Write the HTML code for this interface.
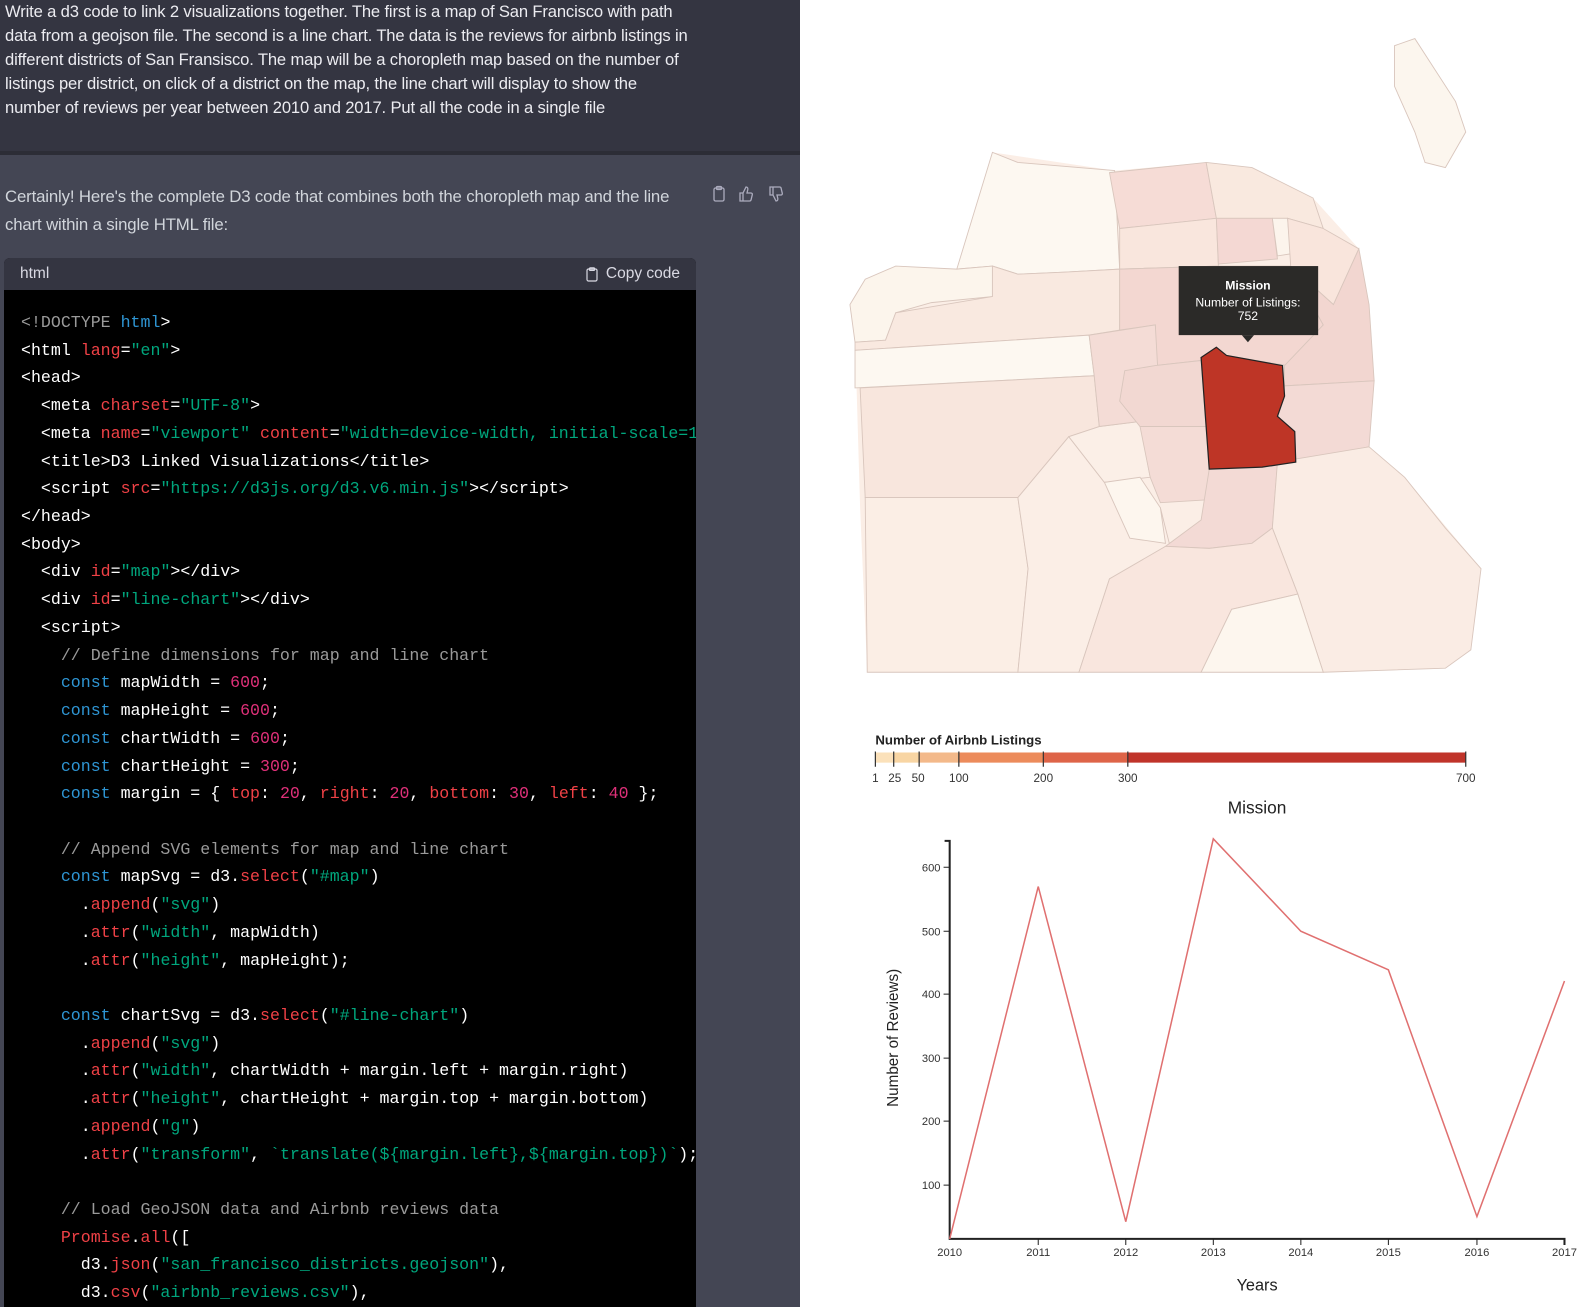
<!DOCTYPE html>
<html><head><meta charset="utf-8">
<style>
*{margin:0;padding:0;box-sizing:border-box}
body{width:1594px;height:1310px;position:relative;overflow:hidden;background:#fff;font-family:"Liberation Sans",sans-serif}
#left{position:absolute;left:0;top:0;width:800px;height:1307px;background:#444654;overflow:hidden}
#prompt{position:absolute;left:0;top:0;width:800px;height:155px;background:#343541;border-bottom:4px solid #2c2d36;color:#ececf1;font-size:16.6px;line-height:24px;padding:0 0 0 5px;white-space:pre;letter-spacing:-0.15px}
#answer{position:absolute;left:5px;top:183px;color:#d1d5db;font-size:16.8px;line-height:28px;white-space:pre;letter-spacing:-0.15px}
#icons{position:absolute;left:712px;top:185px;color:#acacbe}
#cb{position:absolute;left:4px;top:258px;width:692px;height:1060px;background:#000;border-radius:6px 6px 0 0;overflow:hidden}
#cbh{height:32px;background:#343541;color:#d9d9e3;font-size:15.5px;line-height:32px;padding:0 16px 0 16px;position:relative}
#cbh .cp{position:absolute;right:16px;top:0;display:flex;align-items:center;gap:8px}
#code{font-family:"Liberation Mono",monospace;font-size:16.6px;line-height:27.72px;color:#fff;white-space:pre;padding:19px 0 0 17px}
.r{color:#ef4146}.g{color:#00a67d}.b{color:#2e95d3}.c{color:#9a9a9a}.p{color:#df3079}
</style></head><body>
<div id="left">
<div id="prompt">Write a d3 code to link 2 visualizations together. The first is a map of San Francisco with path
data from a geojson file. The second is a line chart. The data is the reviews for airbnb listings in
different districts of San Fransisco. The map will be a choropleth map based on the number of
listings per district, on click of a district on the map, the line chart will display to show the
number of reviews per year between 2010 and 2017. Put all the code in a single file</div>
<div id="answer">Certainly! Here's the complete D3 code that combines both the choropleth map and the line
chart within a single HTML file:</div>
<svg id="icons" width="80" height="18" viewBox="0 0 80 18" fill="none" stroke="#acacbe" stroke-width="1.3">
<rect x="2" y="3" width="10" height="13" rx="1.5"/><rect x="4.5" y="1.5" width="5" height="3" rx="1"/>
<path d="M31 8v8h-3V8zM31 8l3-6c1.5 0 2 1 1.8 2.5L35 8h4c1 0 1.5.8 1.3 1.7l-1.2 5c-.2.8-.8 1.3-1.6 1.3H31"/>
<path d="M61 10V2h-3v8zM61 10l3 6c1.5 0 2-1 1.8-2.5L65 10h4c1 0 1.5-.8 1.3-1.7l-1.2-5C69 2.5 68.4 2 67.6 2H61"/>
</svg>
<div id="cb">
<div id="cbh">html<span class="cp"><svg width="12" height="15" viewBox="0 0 12 15" fill="none" stroke="#d9d9e3" stroke-width="1.2"><rect x="1" y="2" width="10" height="12" rx="1.5"/><rect x="3.5" y="0.8" width="5" height="2.6" rx="0.8"/></svg>Copy code</span></div>
<div id="code"><span class="c">&lt;!DOCTYPE</span> <span class="b">html</span>&gt;
&lt;html <span class="r">lang</span>=<span class="g">"en"</span>&gt;
&lt;head&gt;
  &lt;meta <span class="r">charset</span>=<span class="g">"UTF-8"</span>&gt;
  &lt;meta <span class="r">name</span>=<span class="g">"viewport"</span> <span class="r">content</span>=<span class="g">"width=device-width, initial-scale=1.0"</span>&gt;
  &lt;title&gt;D3 Linked Visualizations&lt;/title&gt;
  &lt;script <span class="r">src</span>=<span class="g">"https://d3js.org/d3.v6.min.js"</span>&gt;&lt;/script&gt;
&lt;/head&gt;
&lt;body&gt;
  &lt;div <span class="r">id</span>=<span class="g">"map"</span>&gt;&lt;/div&gt;
  &lt;div <span class="r">id</span>=<span class="g">"line-chart"</span>&gt;&lt;/div&gt;
  &lt;script&gt;
    <span class="c">// Define dimensions for map and line chart</span>
    <span class="b">const</span> mapWidth = <span class="p">600</span>;
    <span class="b">const</span> mapHeight = <span class="p">600</span>;
    <span class="b">const</span> chartWidth = <span class="p">600</span>;
    <span class="b">const</span> chartHeight = <span class="p">300</span>;
    <span class="b">const</span> margin = { <span class="r">top</span>: <span class="p">20</span>, <span class="r">right</span>: <span class="p">20</span>, <span class="r">bottom</span>: <span class="p">30</span>, <span class="r">left</span>: <span class="p">40</span> };

    <span class="c">// Append SVG elements for map and line chart</span>
    <span class="b">const</span> mapSvg = d3.<span class="r">select</span>(<span class="g">"#map"</span>)
      .<span class="r">append</span>(<span class="g">"svg"</span>)
      .<span class="r">attr</span>(<span class="g">"width"</span>, mapWidth)
      .<span class="r">attr</span>(<span class="g">"height"</span>, mapHeight);

    <span class="b">const</span> chartSvg = d3.<span class="r">select</span>(<span class="g">"#line-chart"</span>)
      .<span class="r">append</span>(<span class="g">"svg"</span>)
      .<span class="r">attr</span>(<span class="g">"width"</span>, chartWidth + margin.left + margin.right)
      .<span class="r">attr</span>(<span class="g">"height"</span>, chartHeight + margin.top + margin.bottom)
      .<span class="r">append</span>(<span class="g">"g"</span>)
      .<span class="r">attr</span>(<span class="g">"transform"</span>, <span class="g">`translate(${margin.left},${margin.top})`</span>);

    <span class="c">// Load GeoJSON data and Airbnb reviews data</span>
    <span class="r">Promise</span>.<span class="r">all</span>([
      d3.<span class="r">json</span>(<span class="g">"san_francisco_districts.geojson"</span>),
      d3.<span class="r">csv</span>(<span class="g">"airbnb_reviews.csv"</span>),
</div>
</div>
</div>
<svg style="position:absolute;left:0;top:0" width="1594" height="1310" viewBox="0 0 1566 1290" preserveAspectRatio="none">
<g stroke="#d9c6bd" stroke-width="0.9">
<polygon fill="#fbeee6" stroke="none" points="840,330 850,275 880,262 940,265 975,150 1095,168 1185,160 1230,165 1290,195 1335,245 1350,380 1345,440 1380,470 1455,560 1445,640 1420,658 852,662 845,500"/>
<polygon fill="#fcf6ee" points="1370,45 1390,38 1430,100 1440,130 1420,165 1400,160 1390,130 1370,85"/>
<polygon fill="#fdf8f1" points="940,265 975,150 1000,160 1095,168 1100,265 1045,268 1000,270 975,262"/>
<polygon fill="#fcf5ec" points="835,300 850,275 880,262 940,265 975,262 975,292 915,298 880,308 870,335 840,337"/>
<polygon fill="#f9e9e0" points="840,337 870,335 880,308 975,292 975,262 1000,270 1045,268 1100,265 1100,325 1070,330 840,345"/>
<polygon fill="#fdf8f1" points="840,345 1070,330 1075,370 840,382"/>
<polygon fill="#f8e6dd" points="845,382 1075,370 1080,420 1050,430 1000,490 850,490"/>
<polygon fill="#fbeee5" points="850,490 1000,490 1010,560 1000,662 852,662"/>
<polygon fill="#fbeee6" points="1000,490 1050,430 1085,475 1140,500 1150,540 1090,570 1060,662 1000,662 1010,560"/>
<polygon fill="#fbefe7" points="1050,430 1080,420 1120,415 1130,470 1085,475"/>
<polygon fill="#fdf6ee" points="1085,475 1120,470 1140,500 1145,535 1110,530"/>
<polygon fill="#f6dcd6" points="1090,170 1185,160 1195,215 1100,225"/>
<polygon fill="#f9e6dd" points="1100,225 1195,215 1197,262 1100,265"/>
<polygon fill="#f9e9df" points="1185,160 1230,165 1290,195 1300,225 1265,215 1195,215"/>
<polygon fill="#f4d8d3" points="1195,215 1250,215 1255,255 1197,260"/>
<polygon fill="#fcf4ec" points="1250,215 1265,215 1268,250 1255,252"/>
<polygon fill="#f9e5dc" points="1265,215 1300,225 1335,245 1310,300 1268,262"/>
<polygon fill="#f3d7d1" points="1100,265 1197,262 1268,262 1300,320 1265,360 1205,350 1180,355 1135,360 1135,320 1100,325"/>
<polygon fill="#f4dcd6" points="1070,330 1135,320 1140,410 1120,415 1080,420 1075,370"/>
<polygon fill="#f2d6d0" points="1268,262 1310,300 1335,245 1345,300 1350,375 1262,380 1262,360 1300,320"/>
<polygon fill="#f3dad5" points="1262,380 1350,375 1345,440 1273,455 1272,425 1255,410"/>
<polygon fill="#f2d8d2" points="1105,365 1135,360 1180,355 1185,420 1120,420 1100,395"/>
<polygon fill="#f4dcd6" points="1120,420 1185,420 1190,492 1140,495 1130,470"/>
<polygon fill="#f3dad5" points="1188,462 1255,457 1250,520 1230,535 1188,540 1145,538 1180,512"/>
<polygon fill="#faece4" points="1255,455 1345,440 1380,470 1420,520 1455,560 1450,600 1445,640 1420,658 1300,662 1275,585 1250,520"/>
<polygon fill="#f9e6de" points="1145,538 1188,540 1230,535 1250,520 1275,585 1210,600 1180,662 1060,662 1090,570"/>
<polygon fill="#fdf6ee" points="1210,600 1275,585 1300,662 1180,662"/>
<polygon fill="#be3526" stroke="#222" stroke-width="1.2" points="1180,352 1195,342 1205,350 1260,360 1262,390 1255,410 1272,425 1273,455 1240,460 1188,462"/>
</g>
<rect x="1158" y="262" width="137" height="68" fill="#2b2a28"/>
<polygon points="1220,330 1232,330 1226,337" fill="#2b2a28"/>
<g fill="#fff" text-anchor="middle" font-size="12">
<text x="1226" y="285" font-weight="bold">Mission</text>
<text x="1226" y="302">Number of Listings:</text>
<text x="1226" y="315">752</text>
</g>
<text x="860" y="733" font-size="13" font-weight="bold" fill="#222">Number of Airbnb Listings</text>
<rect x="860" y="741" width="18" height="10" fill="#fbe1ba"/>
<rect x="878" y="741" width="25" height="10" fill="#f8d5a3"/>
<rect x="903" y="741" width="39" height="10" fill="#f3b98a"/>
<rect x="942" y="741" width="83" height="10" fill="#ec8b5b"/>
<rect x="1025" y="741" width="83" height="10" fill="#de6448"/>
<rect x="1108" y="741" width="332" height="10" fill="#c0342a"/>
<g stroke="#333" stroke-width="1.2"><path d="M860 740v15M878 740v15M903 740v15M942 740v15M1025 740v15M1108 740v15M1440 740v15"/></g>
<g font-size="11.5" fill="#333" text-anchor="middle">
<text x="860" y="770">1</text><text x="879" y="770">25</text><text x="902" y="770">50</text><text x="942" y="770">100</text><text x="1025" y="770">200</text><text x="1108" y="770">300</text><text x="1440" y="770">700</text>
</g>
<text x="1235" y="801" font-size="17" text-anchor="middle" fill="#222">Mission</text>
<path d="M928 828h5v392h604v6" fill="none" stroke="#222" stroke-width="2"/>
<g stroke="#222" stroke-width="1"><path d="M927 854h6M927 917h6M927 979h6M927 1042h6M927 1104h6M927 1167h6M1020 1220v6M1106 1220v6M1192 1220v6M1278 1220v6M1364 1220v6M1451 1220v6"/></g>
<g font-size="11" fill="#333" text-anchor="end">
<text x="924" y="858">600</text><text x="924" y="921">500</text><text x="924" y="983">400</text><text x="924" y="1046">300</text><text x="924" y="1108">200</text><text x="924" y="1171">100</text>
</g>
<g font-size="11" fill="#333" text-anchor="middle">
<text x="933" y="1237">2010</text><text x="1020" y="1237">2011</text><text x="1106" y="1237">2012</text><text x="1192" y="1237">2013</text><text x="1278" y="1237">2014</text><text x="1364" y="1237">2015</text><text x="1451" y="1237">2016</text><text x="1537" y="1237">2017</text>
</g>
<polyline points="933,1220 1020,873 1106,1203 1192,826 1278,917 1364,955 1451,1198 1537,966" fill="none" stroke="#e07070" stroke-width="1.5"/>
<text transform="translate(882,1022) rotate(-90)" font-size="15" text-anchor="middle" fill="#222">Number of Reviews)</text>
<text x="1235" y="1271" font-size="16" text-anchor="middle" fill="#222">Years</text>
</svg>
</body></html>
